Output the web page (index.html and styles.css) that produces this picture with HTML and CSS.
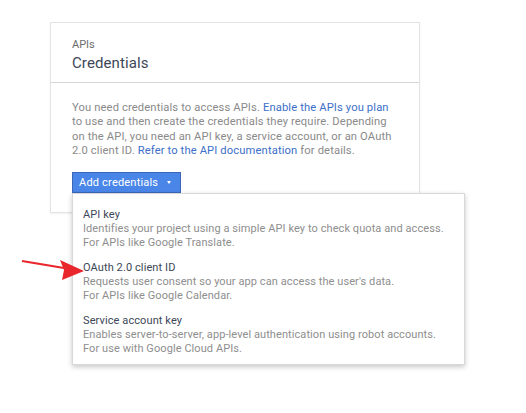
FILE: index.html
```html
<!DOCTYPE html>
<html>
<head>
<meta charset="utf-8">
<link rel="stylesheet" href="styles.css">
</head>
<body>
<div class="page">
  <div class="card">
    <div class="card-head">
      <div class="crumb">APIs</div>
      <div class="title">Credentials</div>
    </div>
    <div class="card-body">
      <p class="intro">You need credentials to access APIs. <a>Enable the APIs you plan</a> to use and then create the credentials they require. Depending on the API, you need an API key, a service account, or an OAuth 2.0 client ID. <a>Refer to the API documentation</a> for details.</p>
      <div class="btn-wrap">
        <div class="btn">Add credentials <span class="caret"></span></div>
        <div class="menu">
          <div class="item">
            <div class="item-title">API key</div>
            <div class="item-desc">Identifies your project using a simple API key to check quota and access.<br>For APIs like Google Translate.</div>
          </div>
          <div class="item">
            <div class="item-title">OAuth 2.0 client ID</div>
            <div class="item-desc">Requests user consent so your app can access the user's data.<br>For APIs like Google Calendar.</div>
          </div>
          <div class="item">
            <div class="item-title">Service account key</div>
            <div class="item-desc">Enables server-to-server, app-level authentication using robot accounts.<br>For use with Google Cloud APIs.</div>
          </div>
        </div>
      </div>
    </div>
  </div>
  <svg class="arrow" width="70" height="24" viewBox="0 0 70 24">
    <line x1="2" y1="3" x2="50" y2="11" stroke="#e8262b" stroke-width="2.2"/>
    <polygon points="64,13 40,2 44,12 42,22" fill="#e8262b"/>
  </svg>
</div>
</body>
</html>
```
FILE: styles.css
```css
html, body {
  margin: 0;
  padding: 0;
  background: #fff;
}
body {
  font-family: Roboto, "Noto Sans", sans-serif;
  -webkit-font-smoothing: antialiased;
}
.page {
  position: relative;
  width: 526px;
  height: 413px;
  padding: 22px 0 0 50px;
  box-sizing: border-box;
}
.card {
  width: 370px;
  height: 191px;
  box-sizing: border-box;
  border: 1px solid #e3e3e3;
  box-shadow: 0 1px 2px rgba(0,0,0,0.06);
  background: #fff;
}
.card-head {
  height: 60px;
  box-sizing: border-box;
  border-bottom: 1px solid #d6d6d6;
  padding: 15px 0 0 21px;
}
.crumb {
  font-size: 11px;
  line-height: 13px;
  color: #6d6d6d;
}
.title {
  font-size: 15px;
  line-height: 20px;
  color: #3c4758;
  margin-top: 2px;
  letter-spacing: 0.1px;
}
.card-body {
  padding: 18px 21px 0 21px;
}
.intro {
  margin: 0;
  width: 320px;
  font-size: 11.2px;
  line-height: 14.4px;
  letter-spacing: 0.13px;
  color: #8a8a8a;
}
.intro a {
  color: #3c6fc8;
}
.btn-wrap {
  position: relative;
  margin-top: 13px;
  width: 109px;
}
.btn {
  height: 21px;
  box-sizing: border-box;
  background: #4a86e8;
  border: 1px solid #3a67b8;
  color: #fff;
  font-size: 11px;
  line-height: 19px;
  padding-left: 6px;
  letter-spacing: 0.2px;
  display: flex;
  align-items: center;
}
.caret {
  display: inline-block;
  width: 0;
  height: 0;
  border-left: 2.5px solid transparent;
  border-right: 2.5px solid transparent;
  border-top: 3px solid #fff;
  margin-left: 9px;
}
.menu {
  position: absolute;
  left: 0;
  top: 21px;
  width: 393px;
  box-sizing: border-box;
  background: #fff;
  border: 1px solid #d8d8d8;
  box-shadow: 0 2px 5px rgba(0,0,0,0.22);
  padding: 13px 10px 8px 10px;
  display: flex;
  flex-direction: column;
  gap: 10px;
}
.item-title {
  font-size: 11px;
  line-height: 15px;
  letter-spacing: 0.1px;
  color: #3c4758;
}
.item-desc {
  font-size: 11px;
  line-height: 14px;
  letter-spacing: 0.08px;
  color: #8e8e8e;
}
.arrow {
  position: absolute;
  left: 20px;
  top: 258px;
}
```
